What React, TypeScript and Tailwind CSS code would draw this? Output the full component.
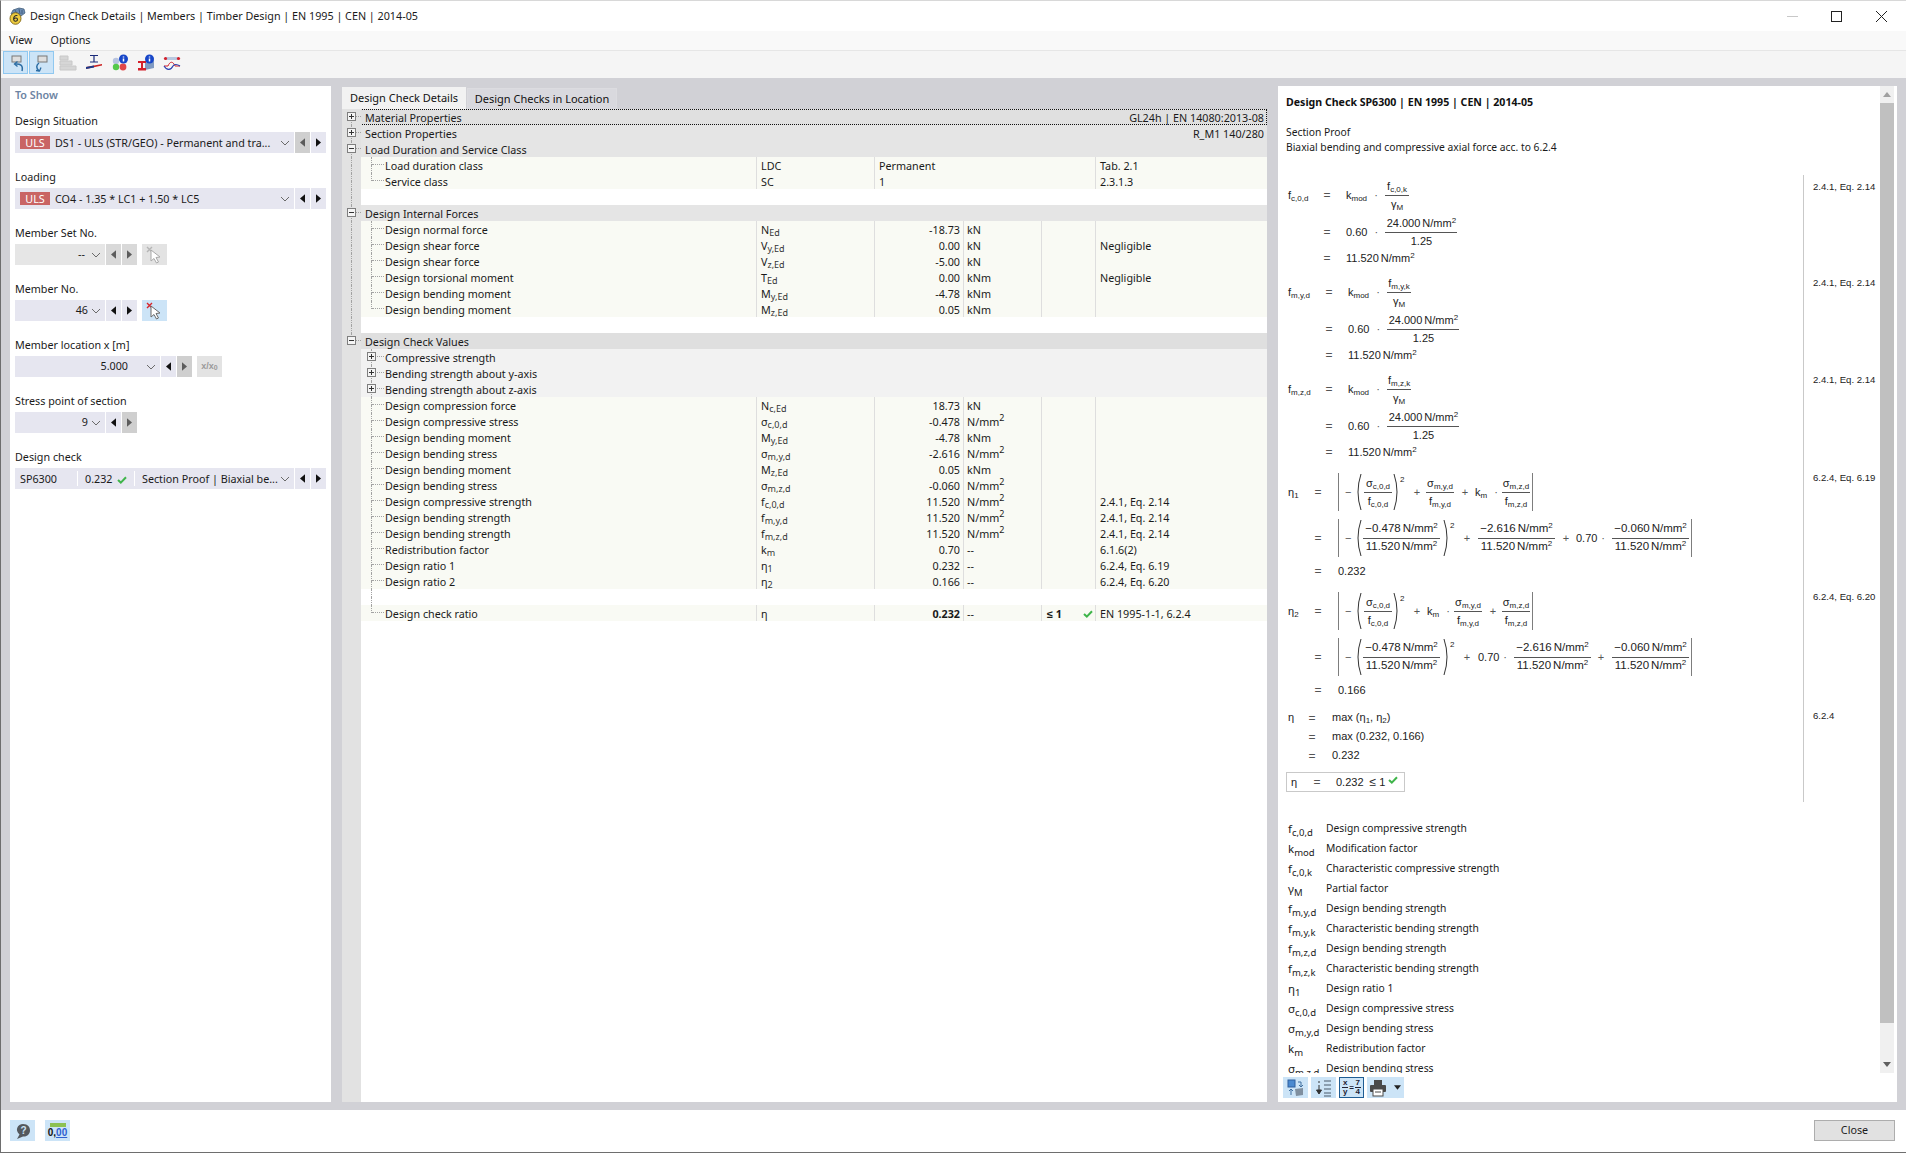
import type { ReactNode } from "react"

const dot = "border-dotted border-[#a3a3a3]"

function Check({ className = "" }: { className?: string }) {
  return (
    <svg viewBox="0 0 10 8" className={`h-[8px] w-[10px] ${className}`}>
      <path d="M1 4 L3.8 6.6 L9 1.2" fill="none" stroke="#3fb54a" strokeWidth="2" />
    </svg>
  )
}

function Tri({ dir, dim }: { dir: "l" | "r"; dim?: boolean }) {
  return (
    <svg viewBox="0 0 6 10" className="h-[9px] w-[5px]">
      <path d={dir === "l" ? "M6 0 L0 5 L6 10 Z" : "M0 0 L6 5 L0 10 Z"} fill={dim ? "#5c5c5c" : "#111"} />
    </svg>
  )
}

function Chevron() {
  return (
    <svg viewBox="0 0 10 6" className="h-[6px] w-[10px]">
      <path d="M1 1 L5 5 L9 1" fill="none" stroke="#6a6a6a" strokeWidth="1" />
    </svg>
  )
}

function StepBtn({ dir, dim }: { dir: "l" | "r"; dim?: "hard" | "soft" }) {
  const bg = dim === "hard" ? "bg-[#cfcfcf]" : dim === "soft" ? "bg-[#d9d9d9]" : "bg-[#e6e6f0]"
  return (
    <div className={`flex h-[21px] w-[15px] items-center justify-center ${bg}`}>
      <Tri dir={dir} dim={!!dim} />
    </div>
  )
}

function Uls() {
  return (
    <span className="flex h-[13px] w-[30px] shrink-0 items-center justify-center bg-[#c96464] pt-px text-white">ULS</span>
  )
}

function Label({ children }: { children: ReactNode }) {
  return <div className="flex h-[19px] items-center pb-[3px]">{children}</div>
}

function PickIcon({ active }: { active?: boolean }) {
  return (
    <svg viewBox="0 0 18 18" className="h-[18px] w-[18px]">
      <path d="M1 1 L6 6 M6 1 L1 6" stroke={active ? "#d8262c" : "#b5b5b5"} strokeWidth="1.4" />
      <path d="M5 4 L5 15 L8 12.5 L10.5 17 L12.5 16 L10 11.5 L14 11 Z" fill="#fff" stroke={active ? "#6a6a6a" : "#a8a8a8"} />
    </svg>
  )
}

function ToShow() {
  return (
    <div className="flex w-[321px] shrink-0 flex-col bg-white pl-[5px]">
      <div className="flex h-[27px] items-start pt-[1px] font-semibold text-[#6d84a3]">To Show</div>

      <Label>Design Situation</Label>
      <div className="flex gap-px">
        <div className="flex h-[21px] w-[279px] items-center bg-[#e6e6f0] pl-[5px] pr-[4px]">
          <Uls />
          <span className="ml-[5px] flex-1 truncate pt-[2px]">DS1 - ULS (STR/GEO) - Permanent and tra...</span>
          <Chevron />
        </div>
        <StepBtn dir="l" dim="hard" />
        <StepBtn dir="r" />
      </div>

      <div className="mt-[16px]"><Label>Loading</Label></div>
      <div className="flex gap-px">
        <div className="flex h-[21px] w-[279px] items-center bg-[#e6e6f0] pl-[5px] pr-[4px]">
          <Uls />
          <span className="ml-[5px] flex-1 truncate pt-[2px]">CO4 - 1.35 * LC1 + 1.50 * LC5</span>
          <Chevron />
        </div>
        <StepBtn dir="l" />
        <StepBtn dir="r" />
      </div>

      <div className="mt-[16px]"><Label>Member Set No.</Label></div>
      <div className="flex gap-px">
        <div className="flex h-[21px] w-[90px] items-center justify-end gap-[6px] bg-[#e6e6e6] pr-[4px]">
          <span>--</span>
          <Chevron />
        </div>
        <StepBtn dir="l" dim="soft" />
        <StepBtn dir="r" dim="soft" />
        <div className="ml-[4px] flex h-[21px] w-[25px] items-center justify-center bg-[#e3e3e3]">
          <PickIcon />
        </div>
      </div>

      <div className="mt-[16px]"><Label>Member No.</Label></div>
      <div className="flex gap-px">
        <div className="flex h-[21px] w-[90px] items-center justify-end gap-[3px] bg-[#e6e6f0] pr-[4px]">
          <span>46</span>
          <Chevron />
        </div>
        <StepBtn dir="l" />
        <StepBtn dir="r" />
        <div className="ml-[4px] flex h-[21px] w-[25px] items-center justify-center bg-[#cce4f7]">
          <PickIcon active />
        </div>
      </div>

      <div className="mt-[16px]"><Label>Member location x [m]</Label></div>
      <div className="flex gap-px">
        <div className="flex h-[21px] w-[145px] items-center justify-end gap-[18px] bg-[#e6e6f0] pr-[4px]">
          <span>5.000</span>
          <Chevron />
        </div>
        <StepBtn dir="l" />
        <StepBtn dir="r" dim="hard" />
        <div className="ml-[4px] flex h-[21px] w-[25px] items-center justify-center bg-[#e3e3e3] font-['Liberation_Sans',sans-serif] text-[9px] font-bold text-[#9a9a9a]">
          x/x<sub className="text-[7px]">0</sub>
        </div>
      </div>

      <div className="mt-[16px]"><Label>Stress point of section</Label></div>
      <div className="flex gap-px">
        <div className="flex h-[21px] w-[90px] items-center justify-end gap-[3px] bg-[#e6e6f0] pr-[4px]">
          <span>9</span>
          <Chevron />
        </div>
        <StepBtn dir="l" />
        <StepBtn dir="r" dim="hard" />
      </div>

      <div className="mt-[16px]"><Label>Design check</Label></div>
      <div className="flex gap-px">
        <div className="flex h-[21px] w-[279px] items-center bg-[#e6e6f0] pr-[4px]">
          <span className="flex h-[15px] w-[63px] items-center border-r border-white pl-[5px] pt-[2px]">SP6300</span>
          <span className="flex h-[15px] w-[57px] items-center gap-[5px] border-r border-white pl-[7px] pt-[2px]">
            0.232 <Check />
          </span>
          <span className="ml-[7px] flex-1 truncate pt-[2px]">Section Proof | Biaxial be...</span>
          <Chevron />
        </div>
        <StepBtn dir="l" />
        <StepBtn dir="r" />
      </div>
    </div>
  )
}

function Expander({ open, className }: { open: boolean; className: string }) {
  return (
    <svg viewBox="0 0 9 9" className={`absolute h-[9px] w-[9px] ${className}`}>
      <rect x="0.5" y="0.5" width="8" height="8" fill="#f4f4f4" stroke="#7f7f7f" />
      <path d={open ? "M2 4.5 H7" : "M2 4.5 H7 M4.5 2 V7"} stroke="#333" />
    </svg>
  )
}

function Strip({ top = true, bottom = true, head, open }: { top?: boolean; bottom?: boolean; head?: boolean; open?: boolean }) {
  return (
    <div className="relative flex h-4 w-[19px] shrink-0 bg-[#e2e2e2]">
      <div className="w-[10px]">
        <div className={`h-2 ${top ? `border-r ${dot}` : ""}`} />
        <div className={`h-2 ${bottom ? `border-r ${dot}` : ""}`} />
      </div>
      {head && <div className={`h-2 flex-1 border-b ${dot}`} />}
      {head && <Expander open={!!open} className="left-[5px] top-[3px]" />}
    </div>
  )
}

function Head({ label, right, open, top = true, bottom = true, bg = "bg-[#e5e5e5]", focus }: { label: string; right?: string; open: boolean; top?: boolean; bottom?: boolean; bg?: string; focus?: boolean }) {
  return (
    <div className={`flex h-4 items-center ${bg} ${focus ? "outline-1 -outline-offset-1 outline-dotted outline-[#111]" : ""}`}>
      <Strip top={top} bottom={bottom} head open={open} />
      <span className="ml-[4px] flex-1 pt-[2px]">{label}</span>
      {right && <span className="pr-[3px] pt-[2px]">{right}</span>}
    </div>
  )
}

function Guide2({ top = true, bottom = true, hline = true }: { top?: boolean; bottom?: boolean; hline?: boolean }) {
  return (
    <div className="flex h-4 shrink-0">
      <div className="w-[11px]">
        <div className={`h-2 ${top ? `border-r ${dot}` : ""}`} />
        <div className={`h-2 ${bottom ? `border-r ${dot}` : ""}`} />
      </div>
      <div className={`h-2 w-[12px] ${hline ? `border-b ${dot}` : ""}`} />
    </div>
  )
}

function Group({ label, stripBottom = false }: { label: string; stripBottom?: boolean }) {
  return (
    <div className="flex h-4 items-center bg-[#f2f2f2]">
      <Strip top={stripBottom} bottom={stripBottom} />
      <div className="relative">
        <Guide2 />
        <Expander open={false} className="left-[6px] top-[3px]" />
      </div>
      <span className="ml-px pt-[2px]">{label}</span>
    </div>
  )
}

function Sym({ b, s }: { b: string; s?: string }) {
  return (
    <span>
      {b}
      {s && <sub className="text-[9px] text-[#333]">{s}</sub>}
    </span>
  )
}

const mm2 = (
  <span>
    N/mm<sup className="text-[9px]">2</sup>
  </span>
)

type Leaf = {
  name: string
  b: string
  s?: string
  val?: string
  unit?: ReactNode
  ref?: string
  text?: string
  bold?: boolean
  cond?: boolean
}

function LeafRow({ r, strip = true, last = false }: { r: Leaf; strip?: boolean; last?: boolean }) {
  const cell = "flex h-4 items-center border-l border-[#dedede] pt-[2px]"
  return (
    <div className="flex h-4 items-center bg-white">
      <Strip top={strip} bottom={strip} />
      <div className="flex h-4 flex-1 items-center bg-[#f9faf4]">
        <div className="flex h-4 w-[395px] shrink-0 items-center">
          <Guide2 bottom={!last} />
          <span className="ml-px pt-[2px]">{r.name}</span>
        </div>
        <div className={`${cell} w-[118px] pl-[4px]`}><Sym b={r.b} s={r.s} /></div>
        {r.text !== undefined ? (
          <div className={`${cell} w-[221px] pl-[4px]`}>{r.text}</div>
        ) : (
          <>
            <div className={`${cell} w-[89px] justify-end pr-[3px] ${r.bold ? "font-bold" : ""}`}>{r.val}</div>
            <div className={`${cell} w-[78px] pl-[3px]`}>{r.unit}</div>
            <div className={`${cell} w-[54px] justify-between pl-[5px] pr-[2px] ${r.cond ? "font-bold" : ""}`}>
              {r.cond && <span>≤ 1</span>}
              {r.cond && <Check />}
            </div>
          </>
        )}
        <div className={`${cell} flex-1 pl-[4px]`}>{r.ref}</div>
      </div>
    </div>
  )
}

function BlankRow({ strip = true, guide }: { strip?: boolean; guide?: boolean }) {
  return (
    <div className="flex h-4 bg-white">
      <Strip top={strip} bottom={strip} />
      {guide && <Guide2 hline={false} />}
    </div>
  )
}

const forces: Leaf[] = [
  { name: "Design normal force", b: "N", s: "Ed", val: "-18.73", unit: "kN" },
  { name: "Design shear force", b: "V", s: "y,Ed", val: "0.00", unit: "kN", ref: "Negligible" },
  { name: "Design shear force", b: "V", s: "z,Ed", val: "-5.00", unit: "kN" },
  { name: "Design torsional moment", b: "T", s: "Ed", val: "0.00", unit: "kNm", ref: "Negligible" },
  { name: "Design bending moment", b: "M", s: "y,Ed", val: "-4.78", unit: "kNm" },
  { name: "Design bending moment", b: "M", s: "z,Ed", val: "0.05", unit: "kNm" },
]

const checks: Leaf[] = [
  { name: "Design compression force", b: "N", s: "c,Ed", val: "18.73", unit: "kN" },
  { name: "Design compressive stress", b: "σ", s: "c,0,d", val: "-0.478", unit: mm2 },
  { name: "Design bending moment", b: "M", s: "y,Ed", val: "-4.78", unit: "kNm" },
  { name: "Design bending stress", b: "σ", s: "m,y,d", val: "-2.616", unit: mm2 },
  { name: "Design bending moment", b: "M", s: "z,Ed", val: "0.05", unit: "kNm" },
  { name: "Design bending stress", b: "σ", s: "m,z,d", val: "-0.060", unit: mm2 },
  { name: "Design compressive strength", b: "f", s: "c,0,d", val: "11.520", unit: mm2, ref: "2.4.1, Eq. 2.14" },
  { name: "Design bending strength", b: "f", s: "m,y,d", val: "11.520", unit: mm2, ref: "2.4.1, Eq. 2.14" },
  { name: "Design bending strength", b: "f", s: "m,z,d", val: "11.520", unit: mm2, ref: "2.4.1, Eq. 2.14" },
  { name: "Redistribution factor", b: "k", s: "m", val: "0.70", unit: "--", ref: "6.1.6(2)" },
  { name: "Design ratio 1", b: "η", s: "1", val: "0.232", unit: "--", ref: "6.2.4, Eq. 6.19" },
  { name: "Design ratio 2", b: "η", s: "2", val: "0.166", unit: "--", ref: "6.2.4, Eq. 6.20" },
]

function Tree() {
  return (
    <div className="flex w-[925px] shrink-0 flex-col">
      <div className="flex h-[23px] items-end text-[11px] text-[#111]">
        <div className="flex h-[22px] w-[124px] items-center justify-center bg-[#f2f2f2]">Design Check Details</div>
        <div className="ml-px flex h-[21px] w-[150px] items-center justify-center border border-b-0 border-[#dcdce0] bg-[#d9d9de]">Design Checks in Location</div>
      </div>
      <div className="flex flex-1 flex-col bg-white">
        <Head label="Material Properties" right="GL24h | EN 14080:2013-08" open={false} top={false} bg="bg-[#e0e0e0]" focus />
        <Head label="Section Properties" right="R_M1 140/280" open={false} />
        <Head label="Load Duration and Service Class" open />
        <LeafRow r={{ name: "Load duration class", b: "LDC", text: "Permanent", ref: "Tab. 2.1" }} />
        <LeafRow r={{ name: "Service class", b: "SC", text: "1", ref: "2.3.1.3" }} last />
        <BlankRow />
        <Head label="Design Internal Forces" open />
        {forces.map((r, i) => (
          <LeafRow key={i} r={r} last={i === forces.length - 1} />
        ))}
        <BlankRow />
        <Head label="Design Check Values" open bottom={false} bg="bg-[#dfdfdf]" />
        <Group label="Compressive strength" />
        <Group label="Bending strength about y-axis" />
        <Group label="Bending strength about z-axis" />
        {checks.map((r, i) => (
          <LeafRow key={i} r={r} strip={false} />
        ))}
        <BlankRow strip={false} guide />
        <LeafRow r={{ name: "Design check ratio", b: "η", val: "0.232", unit: "--", ref: "EN 1995-1-1, 6.2.4", bold: true, cond: true }} strip={false} last />
        <div className="flex flex-1">
          <div className="w-[19px] bg-[#e2e2e2]" />
        </div>
      </div>
    </div>
  )
}

function M({ b, s }: { b: string; s?: string }) {
  return (
    <span>
      {b}
      {s && <sub className="text-[8px]">{s}</sub>}
    </span>
  )
}

function Frac({ n, d, w = "w-[28px]" }: { n: ReactNode; d: ReactNode; w?: string }) {
  return (
    <span className={`inline-flex flex-col items-stretch text-center ${w}`}>
      <span className="flex h-[17px] items-center justify-center whitespace-nowrap">{n}</span>
      <span className="h-px bg-[#555]" />
      <span className="flex h-[17px] items-center justify-center whitespace-nowrap">{d}</span>
    </span>
  )
}

function Q({ v }: { v: string }) {
  return (
    <span className="whitespace-nowrap">
      {v}
      <span className="ml-[2px]">N/mm<sup className="text-[8px]">2</sup></span>
    </span>
  )
}

function Op({ c, className = "" }: { c: string; className?: string }) {
  return <span className={`inline-block w-[8px] shrink-0 text-center text-[#555] ${className}`}>{c}</span>
}

function Paren({ flip }: { flip?: boolean }) {
  return (
    <svg viewBox="0 0 6 36" className="h-[36px] w-[6px] shrink-0">
      <path d={flip ? "M1 0 Q7 18 1 36" : "M5 0 Q-1 18 5 36"} fill="none" stroke="#333" strokeWidth="1" />
    </svg>
  )
}

function Bars({ children }: { children: ReactNode }) {
  return (
    <div className="flex h-[38px] items-center border-x border-[#7d7d7d] pl-[6px] pr-[2px]">{children}</div>
  )
}

function Row({ h, sym, symW, ml, children }: { h: string; sym?: ReactNode; symW: string; ml: string; children: ReactNode }) {
  return (
    <div className={`flex items-center ${h}`}>
      <div className={`shrink-0 ${symW}`}>{sym}</div>
      <div className="w-[12px] shrink-0 text-center text-[12px] text-[#555]">=</div>
      <div className={`flex items-center whitespace-nowrap ${ml}`}>{children}</div>
    </div>
  )
}

function Block({ h, refText, refPt, children }: { h: string; refText?: string; refPt?: string; children: ReactNode }) {
  return (
    <div className={`flex ${h}`}>
      <div className="flex-1 pl-[2px]">{children}</div>
      <div className={`w-[75px] shrink-0 border-l border-[#c9c9c9] pl-[9px] text-[9.6px] ${refPt ?? "pt-[4px]"}`}>{refText}</div>
    </div>
  )
}

const fc = <M b="f" s="c,0,d" />
const fmy = <M b="f" s="m,y,d" />
const fmz = <M b="f" s="m,z,d" />
const sc = <M b="σ" s="c,0,d" />
const smy = <M b="σ" s="m,y,d" />
const smz = <M b="σ" s="m,z,d" />
const km = <M b="k" s="m" />
const q520 = <Q v="11.520" />
const wide = "w-[77px] text-[11.5px]"

function Strength({ h, sym, k, symW, pt }: { h: string; sym: ReactNode; k: string; symW: string; pt?: string }) {
  return (
    <Block h={h} refText="2.4.1, Eq. 2.14" refPt={pt}>
      <Row h="h-[40px]" sym={sym} symW={symW} ml="ml-[13px]">
        <M b="k" s="mod" />
        <Op c="·" className="mx-[5px]" />
        <Frac w="w-[24px]" n={<M b="f" s={k} />} d={<M b="γ" s="M" />} />
      </Row>
      <Row h="h-[34px]" symW={symW} ml="ml-[13px]">
        <span>0.60</span>
        <Op c="·" className="mx-[5px]" />
        <Frac w="w-[72px]" n={<Q v="24.000" />} d="1.25" />
      </Row>
      <Row h="h-[18px]" symW={symW} ml="ml-[13px]">
        {q520}
      </Row>
    </Block>
  )
}

function SmallStart() {
  return (
    <>
      <span className="w-[6px] shrink-0 text-center text-[#555]">−</span>
      <span className="ml-[5px]"><Paren /></span>
      <span className="ml-[2px]"><Frac n={sc} d={fc} /></span>
      <span className="ml-[1px]"><Paren flip /></span>
      <span className="mb-[24px] ml-[1px] w-[4px] text-[8px]">2</span>
    </>
  )
}

function WideStart() {
  return (
    <>
      <span className="w-[6px] shrink-0 text-center text-[#555]">−</span>
      <span className="ml-[5px]"><Paren /></span>
      <span className="ml-[1px]"><Frac w={wide} n={<Q v="−0.478" />} d={q520} /></span>
      <span className="ml-[3px]"><Paren flip /></span>
      <span className="mb-[24px] ml-[1px] w-[4px] text-[8px]">2</span>
    </>
  )
}

function Proof() {
  return (
    <div className="flex flex-1 flex-col font-['Liberation_Sans',sans-serif] text-[11px] text-[#222]">
      <Strength h="h-[97px]" sym={fc} k="c,0,k" symW="w-[33px]" pt="pt-[5px]" />
      <Strength h="h-[97px]" sym={fmy} k="m,y,k" symW="w-[35px]" />
      <Strength h="h-[97px]" sym={fmz} k="m,z,k" symW="w-[35px]" />

      <Block h="h-[119px]" refText="6.2.4, Eq. 6.19" refPt="pt-[5px]">
        <Row h="h-[52px]" sym={<M b="η" s="1" />} symW="w-[24px]" ml="ml-[14px]">
          <Bars>
            <SmallStart />
            <Op c="+" className="ml-[9px]" />
            <span className="ml-[5px]"><Frac n={smy} d={fmy} /></span>
            <Op c="+" className="ml-[7px]" />
            <span className="ml-[6px] w-[12px]">{km}</span>
            <Op c="·" className="ml-[5px]" />
            <span className="ml-[2px]"><Frac n={smz} d={fmz} /></span>
          </Bars>
        </Row>
        <Row h="h-[40px]" symW="w-[24px]" ml="ml-[14px]">
          <Bars>
            <WideStart />
            <Op c="+" className="ml-[9px]" />
            <span className="ml-[7px]"><Frac w={wide} n={<Q v="−2.616" />} d={q520} /></span>
            <Op c="+" className="ml-[7px]" />
            <span className="ml-[6px] w-[22px]">0.70</span>
            <Op c="·" className="ml-[1px]" />
            <span className="ml-[5px]"><Frac w={wide} n={<Q v="−0.060" />} d={q520} /></span>
          </Bars>
        </Row>
        <Row h="h-[26px]" symW="w-[24px]" ml="ml-[14px]">
          <span>0.232</span>
        </Row>
      </Block>

      <Block h="h-[123px]" refText="6.2.4, Eq. 6.20" refPt="pt-[5px]">
        <Row h="h-[52px]" sym={<M b="η" s="2" />} symW="w-[24px]" ml="ml-[14px]">
          <Bars>
            <SmallStart />
            <Op c="+" className="ml-[9px]" />
            <span className="ml-[6px] w-[12px]">{km}</span>
            <Op c="·" className="ml-[5px]" />
            <span className="ml-[2px]"><Frac n={smy} d={fmy} /></span>
            <Op c="+" className="ml-[7px]" />
            <span className="ml-[5px]"><Frac n={smz} d={fmz} /></span>
          </Bars>
        </Row>
        <Row h="h-[40px]" symW="w-[24px]" ml="ml-[14px]">
          <Bars>
            <WideStart />
            <Op c="+" className="ml-[9px]" />
            <span className="ml-[7px] w-[22px]">0.70</span>
            <Op c="·" className="ml-[1px]" />
            <span className="ml-[5px]"><Frac w={wide} n={<Q v="−2.616" />} d={q520} /></span>
            <Op c="+" className="ml-[6px]" />
            <span className="ml-[7px]"><Frac w={wide} n={<Q v="−0.060" />} d={q520} /></span>
          </Bars>
        </Row>
        <Row h="h-[26px]" symW="w-[24px]" ml="ml-[14px]">
          <span>0.166</span>
        </Row>
      </Block>

      <Block h="h-[94px]" refText="6.2.4" refPt="pt-[1px]">
        <Row h="h-[19px]" sym={<M b="η" />} symW="w-[18px]" ml="ml-[14px]">
          max (<M b="η" s="1" />, <span className="ml-[3px]"><M b="η" s="2" /></span>)
        </Row>
        <Row h="h-[19px]" symW="w-[18px]" ml="ml-[14px]">
          max (0.232, <span className="ml-[3px]">0.166)</span>
        </Row>
        <Row h="h-[19px]" symW="w-[18px]" ml="ml-[14px]">
          0.232
        </Row>
        <div className="-ml-[2px] mt-[7px] flex h-[20px] w-[119px] items-center border border-[#c9c9c9] pl-[4px]">
          <span className="w-[20px]">η</span>
          <span className="w-[12px] text-center text-[12px] text-[#555]">=</span>
          <span className="ml-[13px]">0.232</span>
          <span className="ml-[6px] text-[12px]">≤</span>
          <span className="ml-[3px]">1</span>
          <Check className="mb-[4px] ml-[3px]" />
        </div>
      </Block>
    </div>
  )
}

const legend: [string, string, string][] = [
  ["f", "c,0,d", "Design compressive strength"],
  ["k", "mod", "Modification factor"],
  ["f", "c,0,k", "Characteristic compressive strength"],
  ["γ", "M", "Partial factor"],
  ["f", "m,y,d", "Design bending strength"],
  ["f", "m,y,k", "Characteristic bending strength"],
  ["f", "m,z,d", "Design bending strength"],
  ["f", "m,z,k", "Characteristic bending strength"],
  ["η", "1", "Design ratio 1"],
  ["σ", "c,0,d", "Design compressive stress"],
  ["σ", "m,y,d", "Design bending stress"],
  ["k", "m", "Redistribution factor"],
  ["σ", "m,z,d", "Design bending stress"],
]

function Report() {
  return (
    <div className="flex w-[619px] shrink-0 flex-col bg-white">
      <div className="flex h-[987px] pr-[3px]">
        <div className="flex flex-1 flex-col overflow-hidden pl-[8px] text-[10.3px]">
          <div className="mt-[9px] flex h-4 shrink-0 items-center text-[10.6px] font-bold text-[#111]">Design Check SP6300 | EN 1995 | CEN | 2014-05</div>
          <div className="mt-[14px] flex h-[15px] shrink-0 items-center">Section Proof</div>
          <div className="flex h-4 shrink-0 items-center">Biaxial bending and compressive axial force acc. to 6.2.4</div>
          <div className="mt-[19px] flex h-[627px] shrink-0 flex-col pr-[2px]">
            <Proof />
          </div>
          <div className="mt-[17px] flex shrink-0 flex-col">
            {legend.map(([b, s, t], i) => (
              <div key={i} className="flex h-[20px] shrink-0 items-center pl-[2px]">
                <span className="w-[38px] shrink-0 text-[11.5px]">{b}<sub className="text-[9.5px]">{s}</sub></span>
                <span>{t}</span>
              </div>
            ))}
          </div>
        </div>
        <div className="flex w-[14px] shrink-0 flex-col bg-[#f0f0f0]">
          <div className="flex h-[17px] items-center justify-center">
            <svg viewBox="0 0 8 5" className="h-[5px] w-[8px]"><path d="M4 0 L8 5 H0 Z" fill="#a0a0a0" /></svg>
          </div>
          <div className="h-[920px] bg-[#c0c0c0]" />
          <div className="flex flex-1 items-start justify-center pt-[39px]">
            <svg viewBox="0 0 8 5" className="h-[5px] w-[8px]"><path d="M0 0 H8 L4 5 Z" fill="#606060" /></svg>
          </div>
        </div>
      </div>
      <div className="flex items-start gap-[3px] pl-[5px] pt-[4px]">
        <div className="flex h-[21px] w-[25px] items-center justify-center bg-[#cce4f7]">
          <svg viewBox="0 0 18 18" className="h-[18px] w-[18px]">
            <rect x="1" y="1" width="7" height="7" fill="#4b8ad0" stroke="#2f5f9e" />
            <path d="M11 3 H14 V7 M12 6 L14 8 L16 6" fill="none" stroke="#3f6f9f" />
            <path d="M4 16 V10 M2 12 L4 10 L6 12" fill="none" stroke="#3f6f9f" />
            <path d="M8 10 L16 9 V16 L9 17 Z" fill="#7f8f9f" />
          </svg>
        </div>
        <div className="flex h-[21px] w-[25px] items-center justify-center bg-[#cce4f7]">
          <svg viewBox="0 0 18 18" className="h-[18px] w-[18px]">
            <path d="M9 2 H16 M9 6 H16 M9 10 H16 M9 14 H16 M9 17 H16" stroke="#4a5a6a" />
            <path d="M4 2 V4 M4 6 V14 M1.5 11 L4 15 L6.5 11 Z" stroke="#333" fill="#333" />
          </svg>
        </div>
        <div className="flex h-[21px] w-[25px] items-center justify-center border border-[#1f5d94] bg-[#cce4f7] font-['Liberation_Sans',sans-serif] text-[8px] font-bold leading-[8px] text-[#223]">
          <span className="flex flex-col items-center"><span>x</span><span className="h-px w-[6px] bg-[#223]" /><span>y</span></span>
          <span className="mx-px">=</span>
          <span className="flex flex-col items-center"><span>7</span><span className="h-px w-[6px] bg-[#223]" /><span>4</span></span>
        </div>
        <div className="flex h-[21px] w-[37px] items-center justify-between bg-[#cce4f7] pl-[2px] pr-[3px]">
          <svg viewBox="0 0 18 18" className="h-[18px] w-[18px]">
            <rect x="5" y="1" width="8" height="5" fill="#4a4a4a" />
            <rect x="1" y="6" width="16" height="7" rx="1" fill="#4a4a4a" />
            <rect x="4" y="10" width="10" height="7" fill="#fff" stroke="#4a4a4a" />
            <path d="M6 13 H12" stroke="#4a4a4a" />
          </svg>
          <svg viewBox="0 0 8 5" className="h-[5px] w-[7px]"><path d="M0 0 H8 L4 5 Z" fill="#222" /></svg>
        </div>
      </div>
    </div>
  )
}

function Logo() {
  return (
    <svg viewBox="0 0 18 18" className="h-[18px] w-[18px]">
      <path d="M3 7 L5 3 L11 1 L16 2 L17 6 L13 9 L6 9 Z" fill="#6d8db3" stroke="#34506e" strokeWidth="0.7" />
      <path d="M7 3 L9 7 M11 2 L12 7 M14 3 L14 7" stroke="#2f4a6a" strokeWidth="0.7" />
      <ellipse cx="7.5" cy="11.5" rx="5.5" ry="5.8" fill="#eccb3f" stroke="#7d6210" strokeWidth="0.9" />
      <path d="M9.4 8.5 C6.6 8 5.3 10.4 5.7 12.6 C6.1 15 9.7 14.7 9.5 12.2 C9.3 10.7 6.8 10.7 5.9 12" fill="none" stroke="#2a2a2a" strokeWidth="1.1" />
    </svg>
  )
}

function ToolButton({ children, active }: { children: ReactNode; active?: boolean }) {
  return (
    <div className={`flex h-[23px] w-[25px] items-center justify-center ${active ? "border border-[#90c8f0] bg-[#cce4f7]" : ""}`}>{children}</div>
  )
}

function Toolbar() {
  return (
    <div className="flex h-[28px] items-start gap-px border-t border-[#e6e6e6] bg-[#f5f5f5] pl-[2px]">
      <ToolButton active>
        <svg viewBox="0 0 18 18" className="h-[18px] w-[18px]">
          <rect x="5" y="2" width="9" height="6" fill="#dedede" stroke="#777" />
          <path d="M8 10 C13 9.5 16.5 11 15 17" fill="none" stroke="#2b6ca3" strokeWidth="1.5" />
          <path d="M10.5 7.5 L7.5 10 L10.5 12.5" fill="none" stroke="#2b6ca3" strokeWidth="1.3" />
        </svg>
      </ToolButton>
      <ToolButton active>
        <svg viewBox="0 0 18 18" className="h-[18px] w-[18px]">
          <rect x="5" y="2" width="9" height="6" fill="#dedede" stroke="#777" />
          <path d="M6 9 C3 11 3 14 6 17" fill="none" stroke="#2b6ca3" strokeWidth="1.5" />
          <path d="M3 16.5 L6.5 17 L8 13.5" fill="none" stroke="#2b6ca3" strokeWidth="1.3" />
        </svg>
      </ToolButton>
      <ToolButton>
        <svg viewBox="0 0 18 18" className="h-[18px] w-[18px]">
          <path d="M1 2 H9 V6 H1 Z M1 7 H13 V11 H1 Z M1 12 H17 V16 H1 Z" fill="#d6d6d6" stroke="#c8c8c8" />
        </svg>
      </ToolButton>
      <ToolButton>
        <svg viewBox="0 0 18 18" className="h-[18px] w-[18px]">
          <path d="M5 1.5 H13 M9 1.5 V8 M5 8 H13" stroke="#1a2a7a" strokeWidth="1.2" />
          <path d="M1 13 L17 10 V11.5 L1 15 Z" fill="#c22" />
          <path d="M1 13 L9 11.5 V13.5 L1 15 Z" fill="#1a3a8a" />
        </svg>
      </ToolButton>
      <ToolButton>
        <svg viewBox="0 0 18 18" className="h-[18px] w-[18px]">
          <circle cx="5" cy="7" r="3.2" fill="#b8c4e0" />
          <circle cx="5" cy="13" r="3.2" fill="#55c94a" />
          <circle cx="12" cy="13" r="3.4" fill="#e04848" />
          <circle cx="12.5" cy="5" r="4.5" fill="#1746c8" />
          <path d="M12.5 2.5 V3.6 M12.5 4.6 V7.6" stroke="#fff" strokeWidth="1.5" />
        </svg>
      </ToolButton>
      <ToolButton>
        <svg viewBox="0 0 18 18" className="h-[18px] w-[18px]">
          <path d="M8 9 L17 6 V14 L8 16 Z" fill="#7f9ac2" />
          <path d="M1 7 H9 V9 H6 V14 H9 V16.5 H1 V14 H4 V9 H1 Z" fill="#d4202a" />
          <circle cx="12.5" cy="5" r="4.5" fill="#1746c8" />
          <path d="M12.5 2.5 V3.6 M12.5 4.6 V7.6" stroke="#fff" strokeWidth="1.5" />
        </svg>
      </ToolButton>
      <ToolButton>
        <svg viewBox="0 0 18 18" className="h-[18px] w-[18px]">
          <rect x="2" y="3" width="14" height="3" fill="#b8c8e0" />
          <circle cx="2.5" cy="4.5" r="1.6" fill="#d4202a" />
          <circle cx="15.5" cy="4.5" r="1.6" fill="#d4202a" />
          <path d="M1 12 H5 C7 7 10 7 12 12 H17" fill="none" stroke="#d4202a" />
          <path d="M1 12 C4 17 8 16 10 12 C11 10 14 10 17 12" fill="none" stroke="#2a3fb0" strokeWidth="1.2" />
        </svg>
      </ToolButton>
    </div>
  )
}

export default function App() {
  return (
    <div className="flex h-[1153px] w-[1906px] flex-col overflow-hidden border-b border-l border-t border-[#6e6e6e] border-t-[#d8d8d8] bg-white font-['Noto_Sans',sans-serif] text-[10.75px] text-[#1a1a1a]">
      <div className="flex h-[30px] shrink-0 items-center pl-[7px]">
        <Logo />
        <span className="ml-[4px] flex-1">Design Check Details | Members | Timber Design | EN 1995 | CEN | 2014-05</span>
        <div className="flex items-center">
          <svg viewBox="0 0 11 11" className="mr-[33px] h-[11px] w-[11px]"><path d="M0 5.5 H11" stroke="#c8c8c8" /></svg>
          <svg viewBox="0 0 11 11" className="mr-[34px] h-[11px] w-[11px]"><rect x="0.5" y="0.5" width="10" height="10" fill="none" stroke="#222" /></svg>
          <svg viewBox="0 0 11 11" className="mr-[19px] h-[11px] w-[11px]"><path d="M0 0 L11 11 M11 0 L0 11" stroke="#222" /></svg>
        </div>
      </div>
      <div className="flex h-[19px] shrink-0 items-center gap-[18px] bg-[#f9f9f9] pl-[8px]">
        <span>View</span>
        <span>Options</span>
      </div>
      <Toolbar />
      <div className="flex min-h-0 flex-1 bg-[#d1d1d6] pb-[8px] pl-[9px] pt-[8px]">
        <ToShow />
        <div className="ml-[11px]"><div className="flex h-full"><Tree /></div></div>
        <div className="ml-[11px] flex"><Report /></div>
      </div>
      <div className="flex h-[42px] shrink-0 items-start justify-between pl-[9px] pr-[11px] pt-[10px]">
        <div className="flex gap-[10px]">
          <div className="flex h-[21px] w-[25px] items-center justify-center bg-[#cce4f7]">
            <svg viewBox="0 0 18 18" className="h-[18px] w-[18px]">
              <path d="M9 2 C14 2 16 5 16 8.5 C16 12 13 15 9 14.5 L3 17 L5.5 12.5 C3 10 2.5 8 3.2 6 C4 3.5 6.5 2 9 2 Z" fill="#55595e" />
              <text x="9.5" y="12" textAnchor="middle" fontSize="10" fontWeight="700" fill="#cce4f7" fontFamily="Liberation Sans, sans-serif">?</text>
            </svg>
          </div>
          <div className="flex h-[21px] w-[25px] flex-col items-center justify-center bg-[#cce4f7]">
            <span className="h-[4px] w-[16px] bg-[#8cc152]" />
            <span className="font-['Liberation_Sans',sans-serif] text-[10px] font-bold leading-[12px] text-[#111]">0,<span className="text-[#2f5fd0] underline">00</span></span>
          </div>
        </div>
        <div className="flex h-[21px] w-[81px] items-center justify-center border border-[#adadad] bg-[#e1e1e1]">Close</div>
      </div>
    </div>
  )
}
